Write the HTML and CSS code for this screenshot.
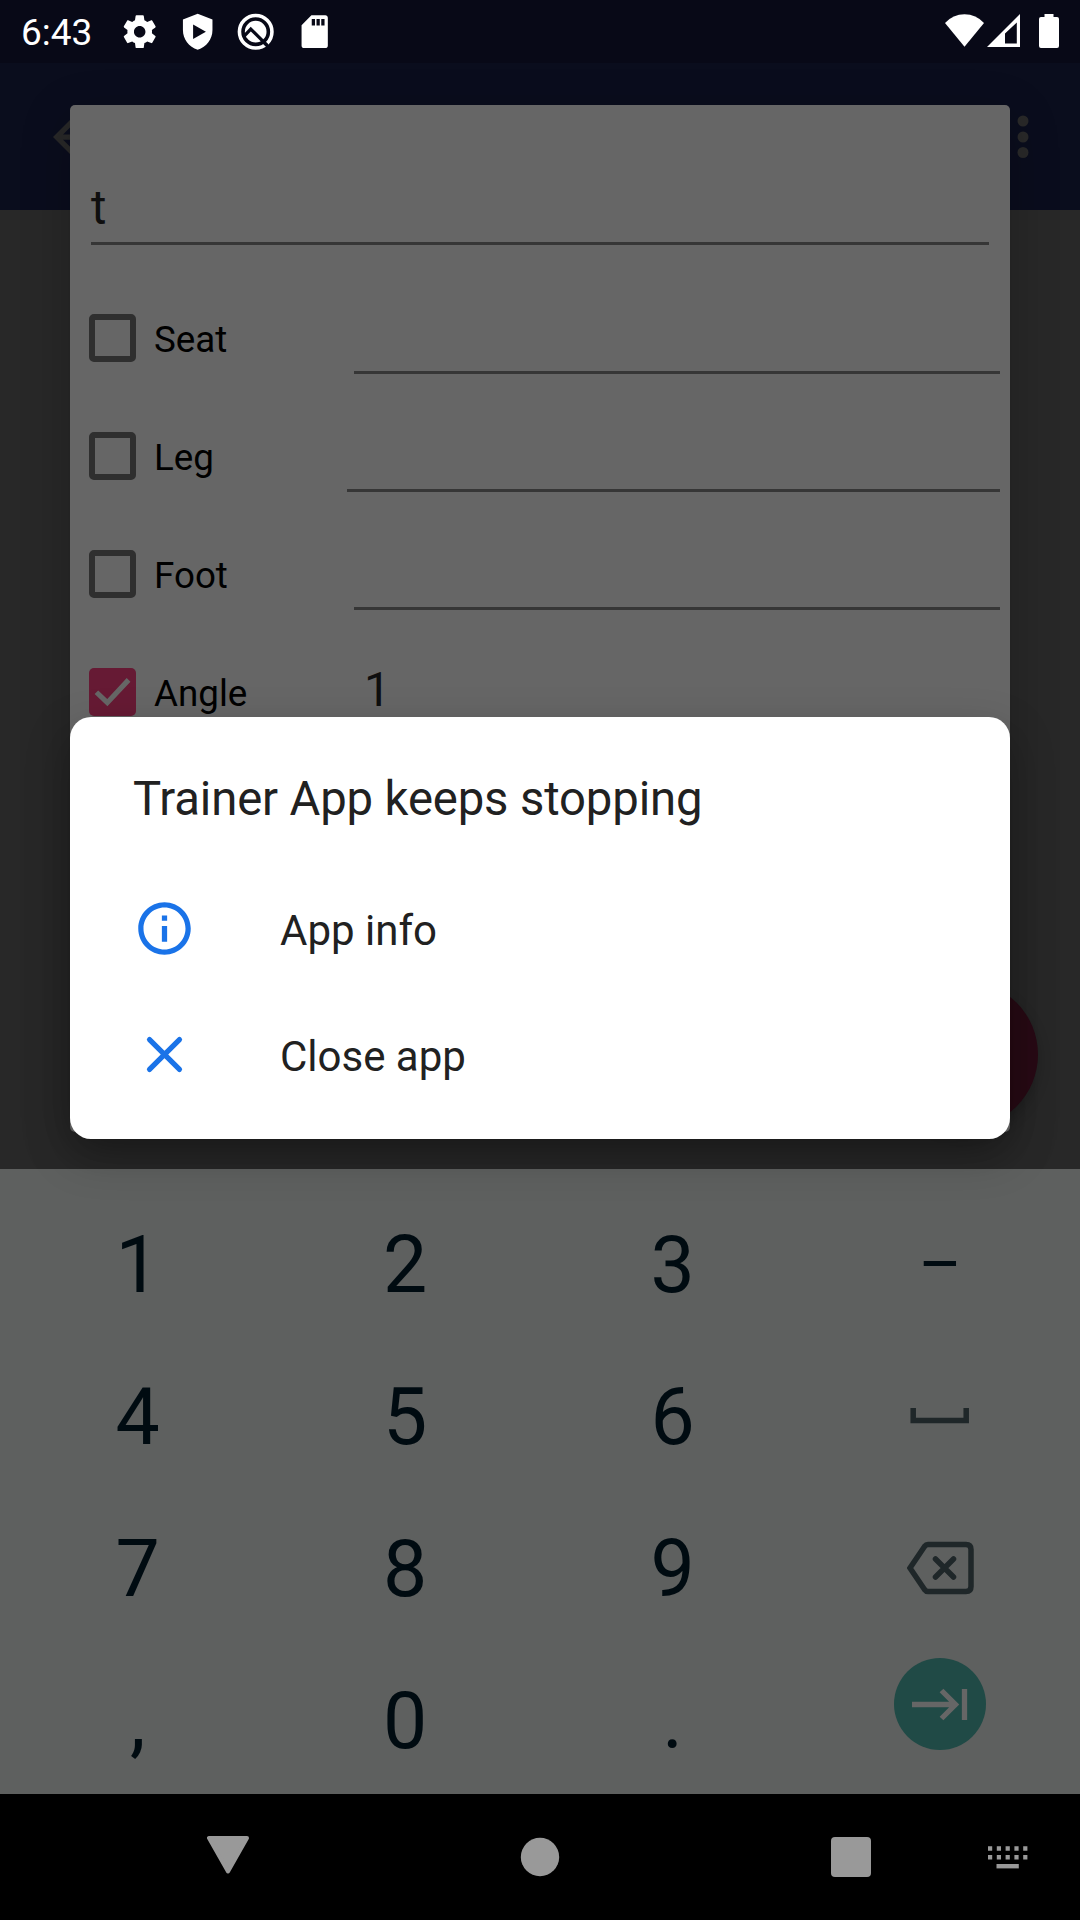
FILE: index.html
```html
<!DOCTYPE html>
<html lang="en">
<head>
<meta charset="utf-8">
<title>Trainer App</title>
<link rel="stylesheet" href="styles.css">
</head>
<body>
<div class="screen">
  <header class="status">
    <span class="clock">6:43</span>
    <div class="notices">
      <svg viewBox="0 0 24 24"><path fill="#fff" d="M19.43 12.98c.04-.32.07-.64.07-.98s-.03-.66-.07-.98l2.11-1.65c.19-.15.24-.42.12-.64l-2-3.46c-.12-.22-.39-.3-.61-.22l-2.49 1c-.52-.4-1.08-.73-1.69-.98l-.38-2.65C14.46 2.18 14.25 2 14 2h-4c-.25 0-.46.18-.49.42l-.38 2.65c-.61.25-1.17.59-1.69.98l-2.49-1c-.23-.09-.49 0-.61.22l-2 3.46c-.13.22-.07.49.12.64l2.11 1.65c-.04.32-.07.65-.07.98s.03.66.07.98l-2.11 1.65c-.19.15-.24.42-.12.64l2 3.46c.12.22.39.3.61.22l2.49-1c.52.4 1.08.73 1.69.98l.38 2.65c.03.24.24.42.49.42h4c.25 0 .46-.18.49-.42l.38-2.65c.61-.25 1.17-.59 1.69-.98l2.49 1c.23.09.49 0 .61-.22l2-3.46c.12-.22.07-.49-.12-.64l-2.11-1.65zM12 15.5c-1.93 0-3.5-1.57-3.5-3.5s1.57-3.5 3.5-3.5 3.5 1.57 3.5 3.5-1.57 3.5-3.5 3.5z"/></svg>
      <svg viewBox="0 0 24 24"><path fill="#fff" fill-rule="evenodd" d="M12 1L3 4.6V11c0 5.6 3.6 10.4 9 12 5.400-1.600 9-6.400 9-12V4.600zM9.200 7.600v8.800L17 12z"/></svg>
      <svg viewBox="0 0 24 24"><circle cx="12" cy="12" r="9.900" fill="none" stroke="#fff" stroke-width="2.200"/><circle cx="12" cy="12" r="6.600" fill="#fff"/><path d="M4.500 15.200L9 10.400l9.800 9.800" fill="none" stroke="#080a19" stroke-width="2"/><path d="M16.500 18l3.800 3.800" stroke="#080a19" stroke-width="2"/></svg>
      <svg viewBox="0 0 24 24"><path fill="#fff" fill-rule="evenodd" d="M18.500 2H10L4 8v12.500C4 21.400 4.700 22 5.500 22h13c.8 0 1.500-.6 1.500-1.500v-17c0-.9-.7-1.500-1.500-1.500zM12.200 8.200H10.200V4.200h2zm2.900 0h-2V4.200h2zm2.900 0h-2V4.200h2z"/></svg>
    </div>
    <div class="system">
      <svg width="39" height="33" viewBox="0 0 39 33"><path fill="#fff" d="M0 9Q8 .3 19.500.3T39 9L19.500 32.800z"/></svg>
      <svg width="33" height="33" viewBox="0 0 33 33"><path fill="#fff" fill-rule="evenodd" d="M33 0v33H0zM29.800 8.500L18 19.500v10h11.800z"/></svg>
      <svg class="battery" width="20" height="34" viewBox="0 0 20 34"><path fill="#fff" d="M5.500 0h9v3H18q2 0 2 2v27q0 2-2 2H2q-2 0-2-2V5q0-2 2-2h3.500z"/></svg>
    </div>
  </header>
  <div class="appbar">
    <svg width="42" height="42" viewBox="4 4 16 16"><path fill="#282828" d="M20 11H7.830l5.590-5.590L12 4l-8 8 8 8 1.410-1.410L7.830 13H20v-2z"/></svg>
    <svg width="12" height="44" viewBox="0 0 12 44"><g fill="#292929"><circle cx="6" cy="6" r="5.500"/><circle cx="6" cy="22" r="5.500"/><circle cx="6" cy="37.500" r="5.500"/></g></svg>
  </div>
  <main class="content"><div class="fab"></div></main>

  <section class="form">
    <div class="name">t</div>
    <div class="row"><i class="box"></i><label>Seat</label><div class="field"></div></div>
    <div class="row"><i class="box"></i><label class="narrow">Leg</label><div class="field"></div></div>
    <div class="row"><i class="box"></i><label>Foot</label><div class="field"></div></div>
    <div class="row"><i class="box checked"><svg viewBox="0 0 48 48"><path d="M7.500 24.500L18.500 35 40 12" fill="none" stroke="#666" stroke-width="5.200"/></svg></i><label>Angle</label><div class="field">1</div></div>
  </section>

  <section class="keyboard">
    <b>1</b><b>2</b><b>3</b><b class="dash">–</b>
    <b>4</b><b>5</b><b>6</b>
    <span class="key"><svg width="60" height="16" viewBox="0 0 60 16"><path d="M3.200 0v12.500h53V0" fill="none" stroke="#1f2729" stroke-width="5.500"/></svg></span>
    <b>7</b><b>8</b><b>9</b>
    <span class="key"><svg width="67" height="54" viewBox="0 0 67 54"><path d="M21 3.500h38q5 0 5 5v37q0 5-5 5H21q-2 0-3.500-2L3 27 17.500 5.500q1.500-2 3.500-2zM28.500 18l18 18m0-18l-18 18" fill="none" stroke="#1f2729" stroke-width="5.500" stroke-linecap="round"/></svg></span>
    <b>,</b><b>0</b><b>.</b>
    <span class="key next"><svg width="92" height="92" viewBox="0 0 92 92"><circle cx="46" cy="46" r="46" fill="#204a46"/><path d="M18 46.500h43M47.500 32.500l14 14-14 14M70.500 31v31" fill="none" stroke="#666" stroke-width="5.300"/></svg></span>
  </section>

  <nav class="nav">
    <svg width="42" height="38" viewBox="0 0 42 38"><path d="M2 2h38L21 35.500z" fill="#999" stroke="#999" stroke-width="4" stroke-linejoin="round"/></svg>
    <svg width="40" height="40" viewBox="0 0 40 40"><circle cx="20" cy="20" r="19.200" fill="#999"/></svg>
    <svg width="40" height="40" viewBox="0 0 40 40"><rect width="40" height="40" rx="4" fill="#999"/></svg>
    <svg class="ime" width="42" height="24" viewBox="0 0 42 24"><path d="M1 3.500h40M1 12.300h40" stroke="#999" stroke-width="4.400" stroke-dasharray="4.200 4.600"/><path d="M9.500 21.200h22.300" stroke="#999" stroke-width="4.400"/></svg>
  </nav>

  <section class="alert">
    <h1>Trainer App keeps stopping</h1>
    <div class="action"><svg viewBox="0 0 24 24"><path fill="#1a73e8" d="M11 7h2v2h-2zm0 4h2v6h-2zm1-9C6.480 2 2 6.480 2 12s4.480 10 10 10 10-4.480 10-10S17.520 2 12 2zm0 18c-4.410 0-8-3.590-8-8s3.590-8 8-8 8 3.590 8 8-3.590 8-8 8z"/></svg><span>App info</span></div>
    <div class="action"><svg viewBox="0 0 24 24"><path d="M6.300 6.300l11.400 11.400m0-11.400L6.300 17.700" fill="none" stroke="#1a73e8" stroke-width="2" stroke-linecap="round"/></svg><span>Close app</span></div>
  </section>
</div>
</body>
</html>
```
FILE: styles.css
```css
* { box-sizing: border-box; }
body { margin: 0; background: #000; font-family: Roboto, "Liberation Sans", sans-serif; }
svg { display: block; flex: none; }
.screen {
  position: relative;
  display: flex;
  flex-direction: column;
  width: 1080px;
  height: 1920px;
  overflow: hidden;
  background: #282828;
}

.status {
  position: relative;
  z-index: 2;
  display: flex;
  align-items: center;
  height: 63px;
  padding: 0 21px;
  background: #080917;
  color: #fff;
}
.clock { width: 99px; font-size: 37px; line-height: 63px; padding-top: 2px; }
.notices { display: flex; gap: 18.800px; }
.notices svg { width: 39.400px; height: 39.400px; }
.system { display: flex; gap: 3px; margin-left: auto; align-items: center; margin-top: -2px; }
.battery { margin-left: 16px; }

.appbar {
  display: flex;
  justify-content: space-between;
  align-items: center;
  height: 147px;
  padding: 0 51px 0 53px;
  background: #0a0d1d;
}
.content { height: 959px; position: relative; }
.fab {
  position: absolute;
  right: 42px;
  top: 770.500px;
  width: 147px;
  height: 147px;
  border-radius: 50%;
  background: #290a15;
  box-shadow: 0 6px 14px rgba(0, 0, 0, .2);
}

.form {
  position: absolute;
  left: 70px;
  top: 105px;
  width: 940px;
  height: 1027px;
  border-radius: 5px;
  background: #666;
  box-shadow: 0 14px 50px rgba(0, 0, 0, .22);
}
.name {
  height: 140px;
  margin: 0 21px 34px;
  padding-top: 73px;
  border-bottom: 3px solid #363636;
  color: #0f0f0f;
  font-size: 47.250px;
  line-height: 60px;
}
.row { display: flex; align-items: center; height: 118px; padding: 0 10px 0 18.500px; }
.box { width: 47.500px; height: 47.500px; border: 6px solid #2f2f2f; border-radius: 5px; }
.box.checked { border: 0; background: #661a34; }
.row label { width: 200px; margin-left: 18px; padding-top: 3px; color: #000; font-size: 36.750px; }
.row .narrow { width: 193px; }
.field {
  flex: 1;
  align-self: flex-end;
  height: 70px;
  margin-bottom: 23px;
  padding-left: 10px;
  border-bottom: 3px solid #363636;
  color: #0f0f0f;
  font-size: 47.250px;
  line-height: 64px;
}

.keyboard {
  position: relative;
  display: grid;
  grid-template-columns: repeat(4, 1fr);
  grid-auto-rows: 152px;
  height: 625px;
  padding: 20px 6px 0 4px;
  overflow: hidden;
  background: #5e605f;
}
.keyboard b { color: #000b11; font-size: 78.750px; font-weight: 400; line-height: 152px; text-align: center; }
.keyboard .dash { font-size: 66px; }
.key { display: flex; align-items: center; justify-content: center; padding-bottom: 2px; }
.next { padding-bottom: 35px; }

.nav { display: flex; align-items: center; gap: 271px; height: 126px; padding-left: 207px; background: #000; }
.nav svg:first-child { margin-top: -4px; }
.nav .ime { margin-left: -155px; }

.alert {
  position: absolute;
  left: 70px;
  top: 717px;
  width: 940px;
  height: 422px;
  padding: 54px 63px 0;
  border-radius: 21px;
  background: #fff;
  box-shadow: 0 16px 44px rgba(0, 0, 0, .25);
  color: #212121;
}
.alert h1 { margin: 0 0 38px; font-size: 47.250px; font-weight: 400; line-height: 56px; letter-spacing: -.14px; }
.action { display: flex; align-items: center; gap: 84px; height: 126px; font-size: 42px; }
.action svg { width: 63px; height: 63px; }
.action span { padding-top: 4px; }
```
